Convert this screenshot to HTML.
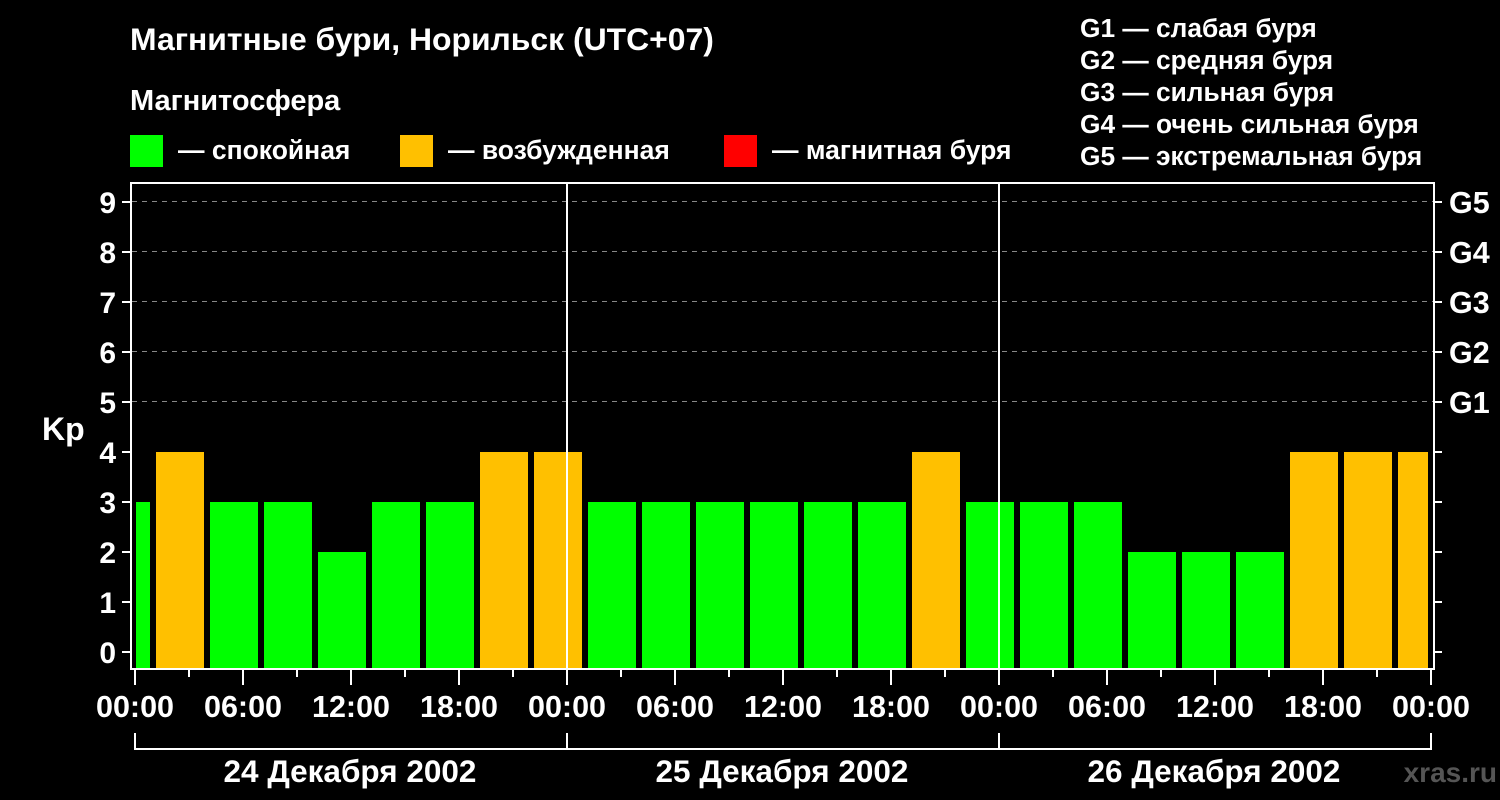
<!DOCTYPE html>
<html><head><meta charset="utf-8"><style>
html,body{margin:0;padding:0;background:#000;}
svg{display:block}
text{font-family:"Liberation Sans",sans-serif;font-weight:bold;fill:#fff}
</style></head><body>
<svg width="1500" height="800" xmlns="http://www.w3.org/2000/svg">
<rect width="1500" height="800" fill="#000"/>
<text x="130" y="50" font-size="31.9">Магнитные бури, Норильск (UTC+07)</text>
<text x="130" y="110" font-size="29">Магнитосфера</text>
<rect x="130" y="135" width="33" height="32" fill="#00ff00"/>
<text x="178" y="159" font-size="26.5">— спокойная</text>
<rect x="400" y="135" width="33" height="32" fill="#ffc000"/>
<text x="448" y="159" font-size="26.5">— возбужденная</text>
<rect x="724" y="135" width="33" height="32" fill="#ff0000"/>
<text x="772" y="159" font-size="26.5">— магнитная буря</text>
<g font-size="26.3">
<text x="1080" y="37">G1 — слабая буря</text>
<text x="1080" y="69">G2 — средняя буря</text>
<text x="1080" y="101">G3 — сильная буря</text>
<text x="1080" y="133">G4 — очень сильная буря</text>
<text x="1080" y="165">G5 — экстремальная буря</text>
</g>
<g stroke="#888" stroke-width="1" stroke-dasharray="5,5">
<line x1="132" y1="201.5" x2="1433" y2="201.5"/>
<line x1="132" y1="251.5" x2="1433" y2="251.5"/>
<line x1="132" y1="301.5" x2="1433" y2="301.5"/>
<line x1="132" y1="351.5" x2="1433" y2="351.5"/>
<line x1="132" y1="401.5" x2="1433" y2="401.5"/>
</g>
<g>
<rect x="136" y="502" width="14" height="167" fill="#00ff00"/>
<rect x="156" y="452" width="48" height="217" fill="#ffc000"/>
<rect x="210" y="502" width="48" height="167" fill="#00ff00"/>
<rect x="264" y="502" width="48" height="167" fill="#00ff00"/>
<rect x="318" y="552" width="48" height="117" fill="#00ff00"/>
<rect x="372" y="502" width="48" height="167" fill="#00ff00"/>
<rect x="426" y="502" width="48" height="167" fill="#00ff00"/>
<rect x="480" y="452" width="48" height="217" fill="#ffc000"/>
<rect x="534" y="452" width="48" height="217" fill="#ffc000"/>
<rect x="588" y="502" width="48" height="167" fill="#00ff00"/>
<rect x="642" y="502" width="48" height="167" fill="#00ff00"/>
<rect x="696" y="502" width="48" height="167" fill="#00ff00"/>
<rect x="750" y="502" width="48" height="167" fill="#00ff00"/>
<rect x="804" y="502" width="48" height="167" fill="#00ff00"/>
<rect x="858" y="502" width="48" height="167" fill="#00ff00"/>
<rect x="912" y="452" width="48" height="217" fill="#ffc000"/>
<rect x="966" y="502" width="48" height="167" fill="#00ff00"/>
<rect x="1020" y="502" width="48" height="167" fill="#00ff00"/>
<rect x="1074" y="502" width="48" height="167" fill="#00ff00"/>
<rect x="1128" y="552" width="48" height="117" fill="#00ff00"/>
<rect x="1182" y="552" width="48" height="117" fill="#00ff00"/>
<rect x="1236" y="552" width="48" height="117" fill="#00ff00"/>
<rect x="1290" y="452" width="48" height="217" fill="#ffc000"/>
<rect x="1344" y="452" width="48" height="217" fill="#ffc000"/>
<rect x="1398" y="452" width="30" height="217" fill="#ffc000"/>
</g>
<g stroke="#fff" stroke-width="2">
<line x1="567" y1="183" x2="567" y2="669"/>
<line x1="999" y1="183" x2="999" y2="669"/>
</g>
<g stroke="#fff" stroke-width="2" fill="none">
<path d="M131 669 V183 H1434 V669 H130"/>
</g>
<g stroke="#fff" stroke-width="2">
<line x1="122" y1="202" x2="131" y2="202"/><line x1="122" y1="252" x2="131" y2="252"/>
<line x1="122" y1="302" x2="131" y2="302"/><line x1="122" y1="352" x2="131" y2="352"/>
<line x1="122" y1="402" x2="131" y2="402"/><line x1="122" y1="452" x2="131" y2="452"/>
<line x1="122" y1="502" x2="131" y2="502"/><line x1="122" y1="552" x2="131" y2="552"/>
<line x1="122" y1="602" x2="131" y2="602"/><line x1="122" y1="652" x2="131" y2="652"/>
<line x1="1434" y1="202" x2="1442" y2="202"/><line x1="1434" y1="252" x2="1442" y2="252"/>
<line x1="1434" y1="302" x2="1442" y2="302"/><line x1="1434" y1="352" x2="1442" y2="352"/>
<line x1="1434" y1="402" x2="1442" y2="402"/><line x1="1434" y1="452" x2="1442" y2="452"/>
<line x1="1434" y1="502" x2="1442" y2="502"/><line x1="1434" y1="552" x2="1442" y2="552"/>
<line x1="1434" y1="602" x2="1442" y2="602"/><line x1="1434" y1="652" x2="1442" y2="652"/>
</g>
<g font-size="30" text-anchor="end">
<text x="116" y="213">9</text><text x="116" y="263">8</text><text x="116" y="313">7</text>
<text x="116" y="363">6</text><text x="116" y="413">5</text><text x="116" y="463">4</text>
<text x="116" y="513">3</text><text x="116" y="563">2</text><text x="116" y="613">1</text>
<text x="116" y="663">0</text>
</g>
<text x="42" y="440" font-size="32">Kp</text>
<g font-size="30.5">
<text x="1449" y="213">G5</text><text x="1449" y="263">G4</text><text x="1449" y="313">G3</text>
<text x="1449" y="363">G2</text><text x="1449" y="413">G1</text>
</g>
<g stroke="#fff" stroke-width="2">
<line x1="135" y1="669" x2="135" y2="685"/><line x1="189" y1="669" x2="189" y2="677"/>
<line x1="243" y1="669" x2="243" y2="685"/><line x1="297" y1="669" x2="297" y2="677"/>
<line x1="351" y1="669" x2="351" y2="685"/><line x1="405" y1="669" x2="405" y2="677"/>
<line x1="459" y1="669" x2="459" y2="685"/><line x1="513" y1="669" x2="513" y2="677"/>
<line x1="567" y1="669" x2="567" y2="685"/><line x1="621" y1="669" x2="621" y2="677"/>
<line x1="675" y1="669" x2="675" y2="685"/><line x1="729" y1="669" x2="729" y2="677"/>
<line x1="783" y1="669" x2="783" y2="685"/><line x1="837" y1="669" x2="837" y2="677"/>
<line x1="891" y1="669" x2="891" y2="685"/><line x1="945" y1="669" x2="945" y2="677"/>
<line x1="999" y1="669" x2="999" y2="685"/><line x1="1053" y1="669" x2="1053" y2="677"/>
<line x1="1107" y1="669" x2="1107" y2="685"/><line x1="1161" y1="669" x2="1161" y2="677"/>
<line x1="1215" y1="669" x2="1215" y2="685"/><line x1="1269" y1="669" x2="1269" y2="677"/>
<line x1="1323" y1="669" x2="1323" y2="685"/><line x1="1377" y1="669" x2="1377" y2="677"/>
<line x1="1431" y1="669" x2="1431" y2="685"/>
</g>
<g font-size="30.5" text-anchor="middle">
<text x="135" y="717">00:00</text><text x="243" y="717">06:00</text><text x="351" y="717">12:00</text>
<text x="459" y="717">18:00</text><text x="567" y="717">00:00</text><text x="675" y="717">06:00</text>
<text x="783" y="717">12:00</text><text x="891" y="717">18:00</text><text x="999" y="717">00:00</text>
<text x="1107" y="717">06:00</text><text x="1215" y="717">12:00</text><text x="1323" y="717">18:00</text>
<text x="1431" y="717">00:00</text>
</g>
<g stroke="#fff" stroke-width="2" fill="none">
<path d="M135 733 V749 H1431 V733"/>
<line x1="567" y1="733" x2="567" y2="749"/>
<line x1="999" y1="733" x2="999" y2="749"/>
</g>
<g font-size="31.5" text-anchor="middle">
<text x="350" y="782">24 Декабря 2002</text>
<text x="782" y="782">25 Декабря 2002</text>
<text x="1214" y="782">26 Декабря 2002</text>
</g>
<text x="1497" y="782" font-size="28" text-anchor="end" style="fill:#555">xras.ru</text>
</svg>
</body></html>
